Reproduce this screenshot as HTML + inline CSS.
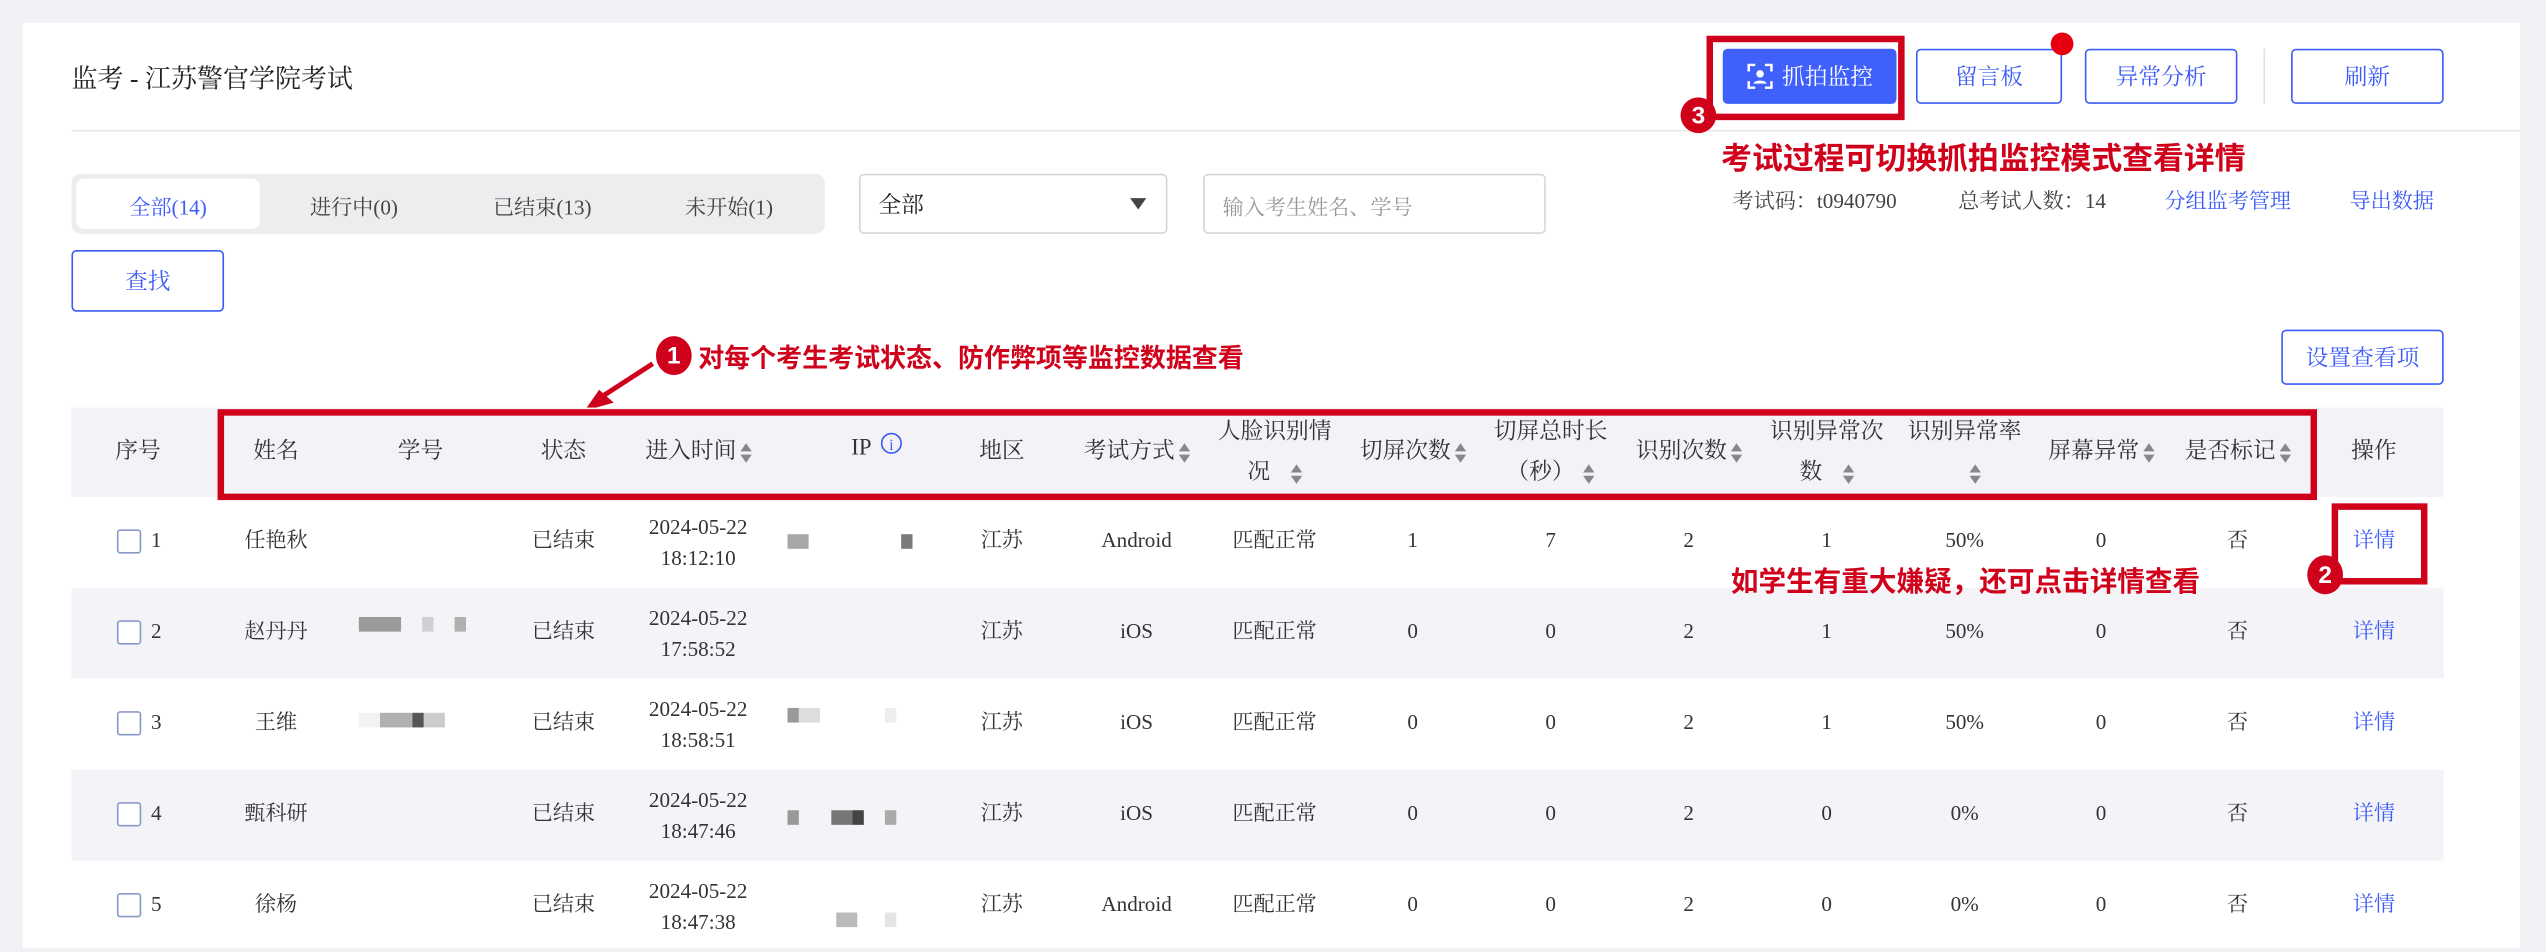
<!DOCTYPE html>
<html><head><meta charset="utf-8">
<style>
html,body{margin:0;padding:0;width:2546px;height:940px;overflow:hidden;background:#f0f1f4;}
#s{position:absolute;left:0;top:0;width:1568px;height:579px;transform:scale(1.6237);transform-origin:0 0;font-family:"Liberation Serif","Noto Serif CJK SC",serif;color:#333;}
.a{position:absolute;}
.card{left:14px;top:14px;width:1538px;height:570px;background:#fff;}
.btn{position:absolute;box-sizing:border-box;border:1.3px solid #3d5cf5;border-radius:3px;color:#3d5cf5;font-size:14px;display:flex;align-items:center;justify-content:center;background:#fff;}
.c{position:absolute;width:110px;text-align:center;font-size:13px;color:#333;white-space:nowrap;line-height:18px;}
.h{position:absolute;width:110px;text-align:center;font-size:14px;color:#333;white-space:nowrap;line-height:25px;}
.row{position:absolute;left:44px;width:1461px;height:56px;}
.alt{background:#f4f4f8;}
.cb{position:absolute;left:72px;width:13px;height:13px;border:1px solid #8a9ac8;border-radius:2px;background:#fff;}
.red{color:#d0021b;font-family:"Liberation Sans","Noto Sans CJK SC",sans-serif;font-weight:bold;}
.badge{position:absolute;border-radius:50%;background:#d0021b;color:#fff;font-family:"Liberation Sans",sans-serif;font-weight:bold;display:flex;align-items:center;justify-content:center;}
.blue{color:#3d5cf5;}
.px{position:absolute;height:9px;}
.so{display:inline-block;vertical-align:middle;margin-left:2px;}
.n{position:absolute;left:93px;font-size:13px;line-height:18px;}
</style></head><body>
<div id="s">
<div class="a card"></div>
<div class="a" style="left:44px;top:36px;font-size:16px;color:#222;">监考 - 江苏警官学院考试</div>
<div class="a" style="left:44px;top:80px;width:1508px;height:1px;background:#eaeaea;"></div>

<div class="a" style="left:1051px;top:22px;width:122px;height:52px;box-sizing:border-box;border:4px solid #d0021b;"></div>
<div class="btn" style="left:1061px;top:30px;width:107px;height:34px;background:#3f60fb;color:#fff;border-color:#3f60fb;">
<svg width="16" height="16" viewBox="0 0 16 16" style="margin-right:6px"><path d="M1 5V1h4M11 1h4v4M15 11v4h-4M5 15H1v-4" stroke="#fff" stroke-width="1.5" fill="none"/><circle cx="8" cy="6.5" r="2.3" fill="#fff"/><path d="M4 12.5c0-2.5 8-2.5 8 0" fill="#fff"/></svg>抓拍监控</div>
<div class="badge" style="left:1035px;top:60px;width:22px;height:22px;font-size:15px;">3</div>
<div class="btn" style="left:1180px;top:30px;width:90px;height:34px;">留言板</div>
<div class="a" style="left:1263px;top:20px;width:14px;height:14px;border-radius:50%;background:#e6000f;"></div>
<div class="btn" style="left:1284px;top:30px;width:94px;height:34px;">异常分析</div>
<div class="a" style="left:1394px;top:30px;width:1px;height:34px;background:#e0e0e0;"></div>
<div class="btn" style="left:1411px;top:30px;width:94px;height:34px;">刷新</div>
<div class="a red" style="left:1060px;top:83px;font-size:19px;">考试过程可切换抓拍监控模式查看详情</div>
<div class="a" style="left:1067px;top:113px;font-size:13px;color:#444;">考试码：t0940790</div>
<div class="a" style="left:1206px;top:113px;font-size:13px;color:#444;">总考试人数：14</div>
<div class="a blue" style="left:1333px;top:113px;font-size:13px;">分组监考管理</div>
<div class="a blue" style="left:1447px;top:113px;font-size:13px;">导出数据</div>

<div class="a" style="left:44px;top:107px;width:464px;height:37px;background:#ededf0;border-radius:6px;"></div>
<div class="a" style="left:47px;top:110px;width:113px;height:31px;background:#fff;border-radius:5px;"></div>
<div class="a blue" style="left:47px;top:117px;width:113px;text-align:center;font-size:13px;">全部(14)</div>
<div class="a" style="left:163px;top:117px;width:110px;text-align:center;font-size:13px;color:#444;">进行中(0)</div>
<div class="a" style="left:279px;top:117px;width:110px;text-align:center;font-size:13px;color:#444;">已结束(13)</div>
<div class="a" style="left:394px;top:117px;width:110px;text-align:center;font-size:13px;color:#444;">未开始(1)</div>
<div class="a" style="left:529px;top:107px;width:190px;height:37px;box-sizing:border-box;border:1px solid #d6d6d6;border-radius:3px;"></div>
<div class="a" style="left:541px;top:116px;font-size:14px;color:#222;">全部</div>
<div class="a" style="left:696px;top:122px;width:0;height:0;border-left:5px solid transparent;border-right:5px solid transparent;border-top:7px solid #444;"></div>
<div class="a" style="left:741px;top:107px;width:211px;height:37px;box-sizing:border-box;border:1px solid #d6d6d6;border-radius:3px;"></div>
<div class="a" style="left:753px;top:117px;font-size:13px;color:#999;">输入考生姓名、学号</div>
<div class="btn" style="left:44px;top:154px;width:94px;height:38px;">查找</div>

<div class="badge" style="left:404px;top:207px;width:22px;height:24px;font-size:15px;">1</div>
<div class="a red" style="left:430px;top:207px;font-size:16px;">对每个考生考试状态、防作弊项等监控数据查看</div>
<svg class="a" style="left:350px;top:220px;" width="60" height="40"><path d="M52 4L18 26" stroke="#d0021b" stroke-width="3"/><path d="M10 33L28 28L19 20Z" fill="#d0021b"/></svg>
<div class="btn" style="left:1405px;top:203px;width:100px;height:34px;">设置查看项</div>

<div class="a" style="left:44px;top:251px;width:1461px;height:55px;background:#f3f3f7;"></div>
<div class="a" style="left:134px;top:252px;width:1293px;height:56px;box-sizing:border-box;border:4px solid #d0021b;"></div>
<div class="h" style="left:30px;top:266px;">序号</div>
<div class="h" style="left:115px;top:266px;">姓名</div>
<div class="h" style="left:204px;top:266px;">学号</div>
<div class="h" style="left:292px;top:266px;">状态</div>
<div class="h" style="left:375px;top:266px;">进入时间<svg class="so" width="7" height="12"><path d="M0 5L3.5 0L7 5ZM0 7L3.5 12L7 7Z" fill="#888"/></svg></div>
<div class="h" style="left:485px;top:264px;">IP <svg class="so" width="14" height="14" style="vertical-align:top;margin-top:2px"><circle cx="7" cy="7" r="6" stroke="#3d5cf5" fill="none"/><text x="7" y="11" font-size="10" text-anchor="middle" fill="#3d5cf5" font-family="Liberation Serif">i</text></svg></div>
<div class="h" style="left:562px;top:266px;">地区</div>
<div class="h" style="left:645px;top:266px;">考试方式<svg class="so" width="7" height="12"><path d="M0 5L3.5 0L7 5ZM0 7L3.5 12L7 7Z" fill="#888"/></svg></div>
<div class="h" style="left:730px;top:254px;">人脸识别情<br>况 &nbsp; <svg class="so" width="7" height="12"><path d="M0 5L3.5 0L7 5ZM0 7L3.5 12L7 7Z" fill="#888"/></svg></div>
<div class="h" style="left:815px;top:266px;">切屏次数<svg class="so" width="7" height="12"><path d="M0 5L3.5 0L7 5ZM0 7L3.5 12L7 7Z" fill="#888"/></svg></div>
<div class="h" style="left:900px;top:254px;">切屏总时长<br>（秒） <svg class="so" width="7" height="12"><path d="M0 5L3.5 0L7 5ZM0 7L3.5 12L7 7Z" fill="#888"/></svg></div>
<div class="h" style="left:985px;top:266px;">识别次数<svg class="so" width="7" height="12"><path d="M0 5L3.5 0L7 5ZM0 7L3.5 12L7 7Z" fill="#888"/></svg></div>
<div class="h" style="left:1070px;top:254px;">识别异常次<br>数 &nbsp; <svg class="so" width="7" height="12"><path d="M0 5L3.5 0L7 5ZM0 7L3.5 12L7 7Z" fill="#888"/></svg></div>
<div class="h" style="left:1155px;top:254px;">识别异常率<br>&nbsp; &nbsp;<svg class="so" width="7" height="12"><path d="M0 5L3.5 0L7 5ZM0 7L3.5 12L7 7Z" fill="#888"/></svg></div>
<div class="h" style="left:1239px;top:266px;">屏幕异常<svg class="so" width="7" height="12"><path d="M0 5L3.5 0L7 5ZM0 7L3.5 12L7 7Z" fill="#888"/></svg></div>
<div class="h" style="left:1323px;top:266px;">是否标记<svg class="so" width="7" height="12"><path d="M0 5L3.5 0L7 5ZM0 7L3.5 12L7 7Z" fill="#888"/></svg></div>
<div class="h" style="left:1407px;top:266px;">操作</div>

<div class="row" style="top:306px;"></div>
<div class="row alt" style="top:362px;"></div>
<div class="row" style="top:418px;"></div>
<div class="row alt" style="top:474px;"></div>
<div class="row" style="top:530px;"></div>

<div class="cb" style="top:326px;"></div><div class="n" style="top:324px;">1</div>
<div class="c" style="left:115px;top:324px;">任艳秋</div>
<div class="c" style="left:292px;top:324px;">已结束</div>
<div class="c" style="left:375px;top:315px;line-height:19px;">2024-05-22<br>18:12:10</div>
<div class="px" style="left:485px;top:329px;width:13px;background:#a8a8a8;"></div><div class="px" style="left:555px;top:329px;width:7px;background:#7a7a7a;"></div>
<div class="c" style="left:562px;top:324px;">江苏</div>
<div class="c" style="left:645px;top:324px;">Android</div>
<div class="c" style="left:730px;top:324px;">匹配正常</div>
<div class="c" style="left:815px;top:324px;">1</div>
<div class="c" style="left:900px;top:324px;">7</div>
<div class="c" style="left:985px;top:324px;">2</div>
<div class="c" style="left:1070px;top:324px;">1</div>
<div class="c" style="left:1155px;top:324px;">50%</div>
<div class="c" style="left:1239px;top:324px;">0</div>
<div class="c" style="left:1323px;top:324px;">否</div>
<div class="c" style="left:1407px;top:324px;color:#3d5cf5;">详情</div>

<div class="cb" style="top:382px;"></div><div class="n" style="top:380px;">2</div>
<div class="c" style="left:115px;top:380px;">赵丹丹</div>
<div class="px" style="left:221px;top:380px;width:26px;background:#9a9a9a;"></div><div class="px" style="left:260px;top:380px;width:7px;background:#d0d0d4;"></div><div class="px" style="left:280px;top:380px;width:7px;background:#b0b0b0;"></div>
<div class="c" style="left:292px;top:380px;">已结束</div>
<div class="c" style="left:375px;top:371px;line-height:19px;">2024-05-22<br>17:58:52</div>
<div class="c" style="left:562px;top:380px;">江苏</div>
<div class="c" style="left:645px;top:380px;">iOS</div>
<div class="c" style="left:730px;top:380px;">匹配正常</div>
<div class="c" style="left:815px;top:380px;">0</div>
<div class="c" style="left:900px;top:380px;">0</div>
<div class="c" style="left:985px;top:380px;">2</div>
<div class="c" style="left:1070px;top:380px;">1</div>
<div class="c" style="left:1155px;top:380px;">50%</div>
<div class="c" style="left:1239px;top:380px;">0</div>
<div class="c" style="left:1323px;top:380px;">否</div>
<div class="c" style="left:1407px;top:380px;color:#3d5cf5;">详情</div>

<div class="cb" style="top:438px;"></div><div class="n" style="top:436px;">3</div>
<div class="c" style="left:115px;top:436px;">王维</div>
<div class="px" style="left:221px;top:439px;width:13px;background:#f2f2f2;"></div><div class="px" style="left:234px;top:439px;width:20px;background:#b0b0b0;"></div><div class="px" style="left:254px;top:439px;width:7px;background:#555;"></div><div class="px" style="left:261px;top:439px;width:13px;background:#ccc;"></div>
<div class="c" style="left:292px;top:436px;">已结束</div>
<div class="c" style="left:375px;top:427px;line-height:19px;">2024-05-22<br>18:58:51</div>
<div class="px" style="left:485px;top:436px;width:7px;background:#999;"></div><div class="px" style="left:492px;top:436px;width:13px;background:#ddd;"></div><div class="px" style="left:545px;top:436px;width:7px;background:#eee;"></div>
<div class="c" style="left:562px;top:436px;">江苏</div>
<div class="c" style="left:645px;top:436px;">iOS</div>
<div class="c" style="left:730px;top:436px;">匹配正常</div>
<div class="c" style="left:815px;top:436px;">0</div>
<div class="c" style="left:900px;top:436px;">0</div>
<div class="c" style="left:985px;top:436px;">2</div>
<div class="c" style="left:1070px;top:436px;">1</div>
<div class="c" style="left:1155px;top:436px;">50%</div>
<div class="c" style="left:1239px;top:436px;">0</div>
<div class="c" style="left:1323px;top:436px;">否</div>
<div class="c" style="left:1407px;top:436px;color:#3d5cf5;">详情</div>

<div class="cb" style="top:494px;"></div><div class="n" style="top:492px;">4</div>
<div class="c" style="left:115px;top:492px;">甄科研</div>
<div class="c" style="left:292px;top:492px;">已结束</div>
<div class="c" style="left:375px;top:483px;line-height:19px;">2024-05-22<br>18:47:46</div>
<div class="px" style="left:485px;top:499px;width:7px;background:#999;"></div><div class="px" style="left:512px;top:499px;width:13px;background:#777;"></div><div class="px" style="left:525px;top:499px;width:7px;background:#444;"></div><div class="px" style="left:545px;top:499px;width:7px;background:#aaa;"></div>
<div class="c" style="left:562px;top:492px;">江苏</div>
<div class="c" style="left:645px;top:492px;">iOS</div>
<div class="c" style="left:730px;top:492px;">匹配正常</div>
<div class="c" style="left:815px;top:492px;">0</div>
<div class="c" style="left:900px;top:492px;">0</div>
<div class="c" style="left:985px;top:492px;">2</div>
<div class="c" style="left:1070px;top:492px;">0</div>
<div class="c" style="left:1155px;top:492px;">0%</div>
<div class="c" style="left:1239px;top:492px;">0</div>
<div class="c" style="left:1323px;top:492px;">否</div>
<div class="c" style="left:1407px;top:492px;color:#3d5cf5;">详情</div>

<div class="cb" style="top:550px;"></div><div class="n" style="top:548px;">5</div>
<div class="c" style="left:115px;top:548px;">徐杨</div>
<div class="c" style="left:292px;top:548px;">已结束</div>
<div class="c" style="left:375px;top:539px;line-height:19px;">2024-05-22<br>18:47:38</div>
<div class="px" style="left:515px;top:562px;width:13px;background:#bbb;"></div><div class="px" style="left:545px;top:562px;width:7px;background:#e4e4e4;"></div>
<div class="c" style="left:562px;top:548px;">江苏</div>
<div class="c" style="left:645px;top:548px;">Android</div>
<div class="c" style="left:730px;top:548px;">匹配正常</div>
<div class="c" style="left:815px;top:548px;">0</div>
<div class="c" style="left:900px;top:548px;">0</div>
<div class="c" style="left:985px;top:548px;">2</div>
<div class="c" style="left:1070px;top:548px;">0</div>
<div class="c" style="left:1155px;top:548px;">0%</div>
<div class="c" style="left:1239px;top:548px;">0</div>
<div class="c" style="left:1323px;top:548px;">否</div>
<div class="c" style="left:1407px;top:548px;color:#3d5cf5;">详情</div>

<div class="a" style="left:1436px;top:310px;width:59px;height:50px;box-sizing:border-box;border:4px solid #d0021b;"></div>
<div class="badge" style="left:1421px;top:342px;width:22px;height:24px;font-size:15px;">2</div>
<div class="a red" style="left:1066px;top:344px;font-size:17px;">如学生有重大嫌疑，还可点击详情查看</div>
</div>
</body></html>
